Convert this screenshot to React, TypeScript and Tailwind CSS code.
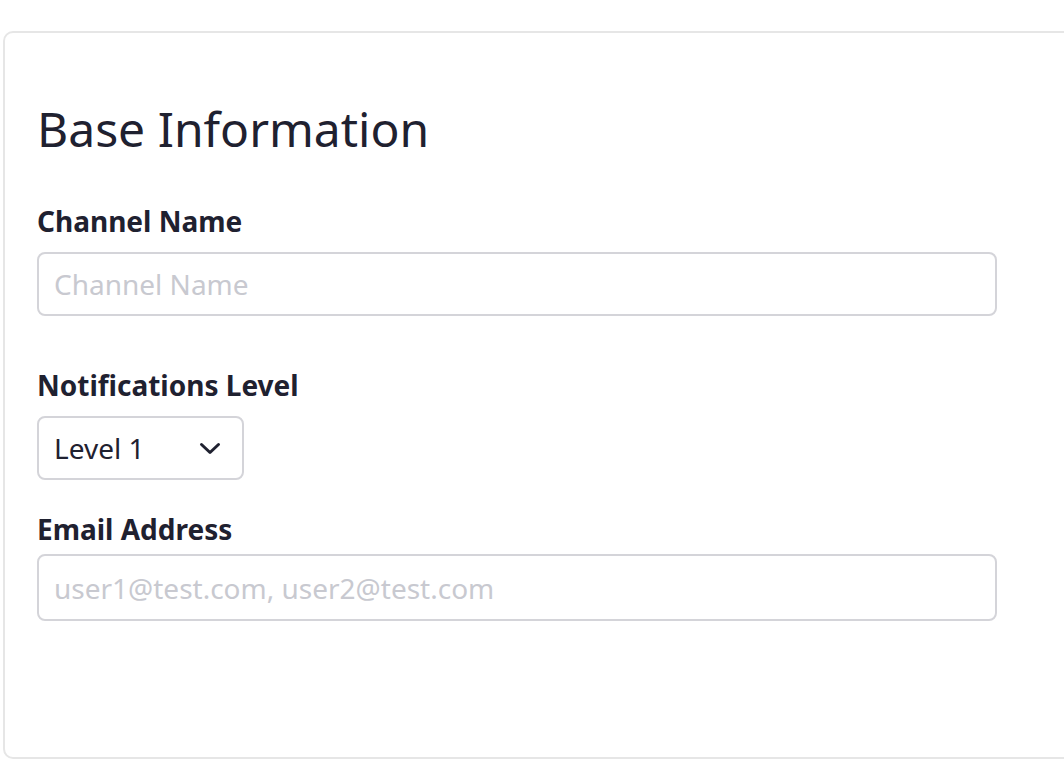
import React from "react";

export default function App() {
  return (
    <div className="w-[1064px] h-[774px] bg-white overflow-hidden" style={{ fontFamily: '"Noto Sans", "Open Sans", sans-serif' }}>
      <div className="ml-[3px] mt-[31px] w-[1100px] h-[728px] border-2 border-[#e6e6e6] rounded-[10px] pl-[32px] pt-[60px]">
        <h1 className="text-[48px] leading-[72px] text-[#1f2130] font-normal mb-[38px]">Base Information</h1>
        <div className="mb-[51px]">
          <label className="block text-[28px] leading-[36px] font-bold text-[#1f2130] mb-[13px]">Channel Name</label>
          <input
            className="w-[960px] h-[64px] border-2 border-[#d4d4d9] rounded-[8px] px-[15px] text-[28px] text-[#1f2130] placeholder:text-[#c8c9d0] outline-none"
            placeholder="Channel Name"
          />
        </div>
        <div className="mb-[31px]">
          <label className="block text-[28px] leading-[36px] font-bold text-[#1f2130] mb-[13px]">Notifications Level</label>
          <div className="w-[207px] h-[64px] border-2 border-[#d4d4d9] rounded-[8px] pl-[15px] pr-[21px] flex items-center justify-between text-[28px] text-[#1f2130]">
            <span>Level 1</span>
            <svg width="22" height="13" viewBox="0 0 22 13" fill="none" stroke="#1f2130" strokeWidth="3" strokeLinecap="round" strokeLinejoin="round">
              <path d="M2.5 2.5l8.5 8 8.5-8" />
            </svg>
          </div>
        </div>
        <div>
          <label className="block text-[28px] leading-[36px] font-bold text-[#1f2130] mb-[7px]">Email Address</label>
          <input
            className="w-[960px] h-[67px] border-2 border-[#d4d4d9] rounded-[8px] px-[15px] text-[28px] text-[#1f2130] placeholder:text-[#c8c9d0] outline-none"
            placeholder="user1@test.com, user2@test.com"
          />
        </div>
      </div>
    </div>
  );
}
